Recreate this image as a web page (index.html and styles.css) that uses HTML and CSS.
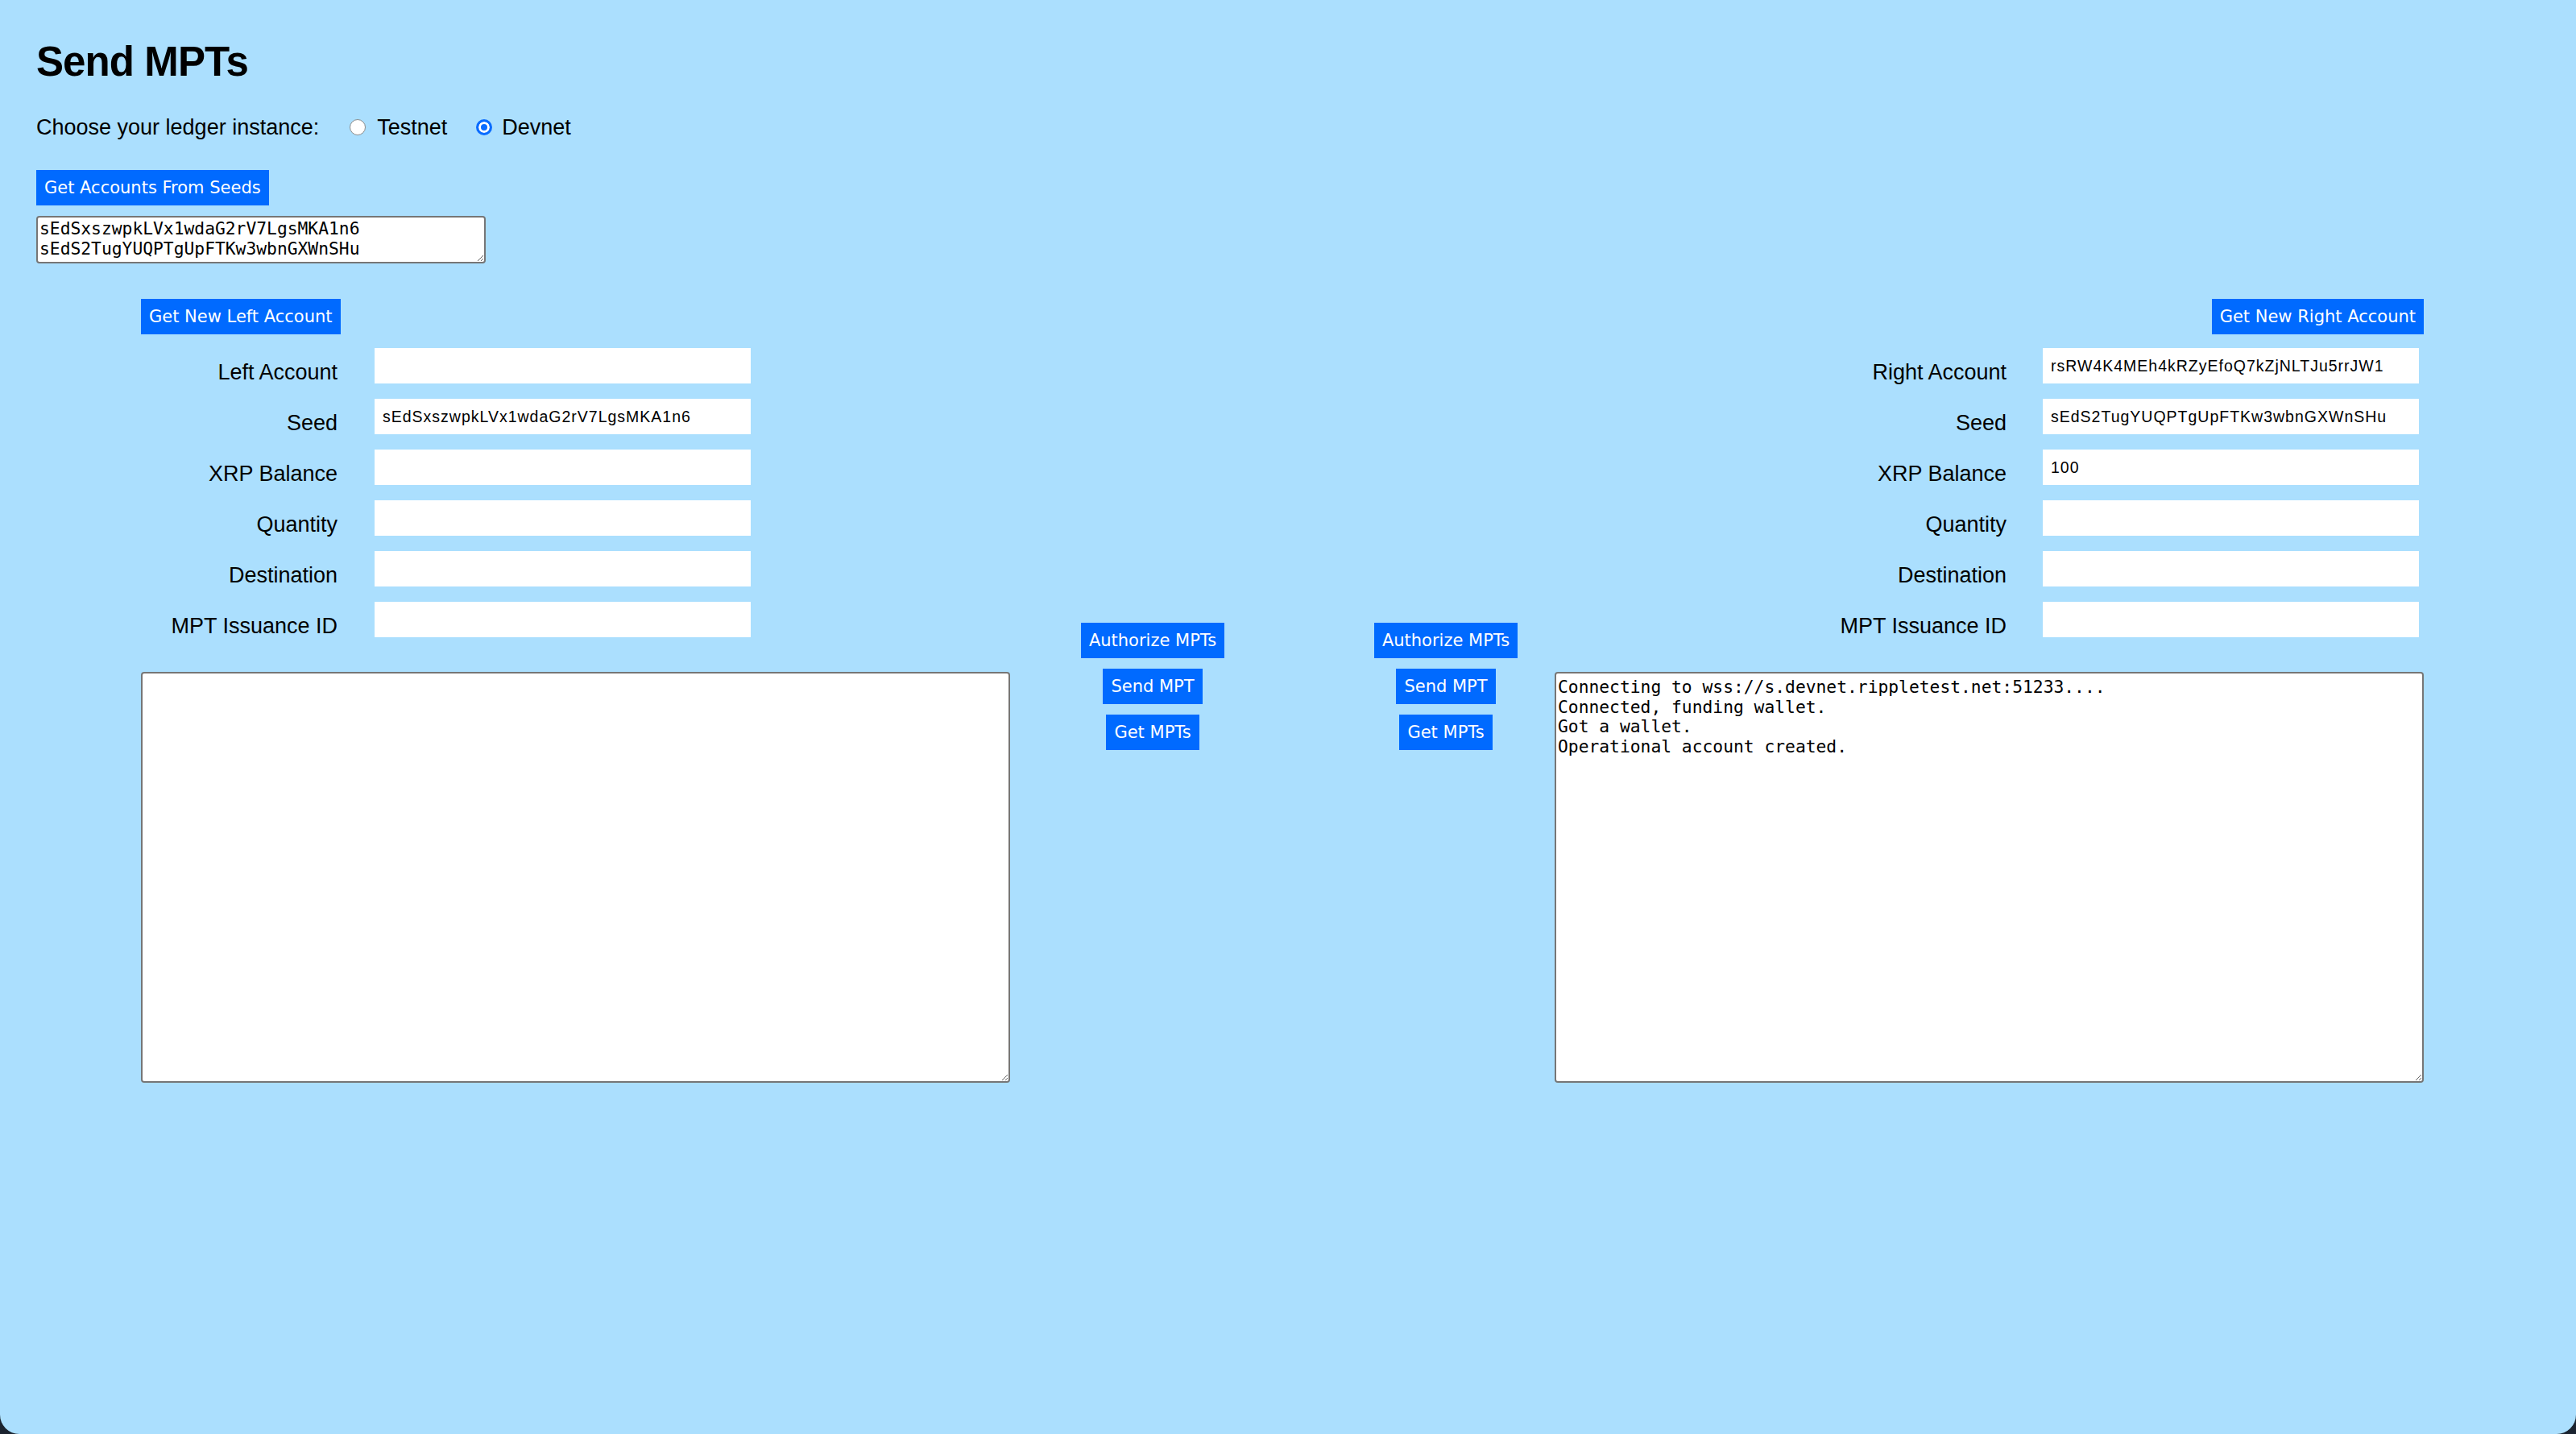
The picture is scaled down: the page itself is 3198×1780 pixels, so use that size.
FILE: index.html
```html
<!DOCTYPE html>
<html lang="en">
<head>
<meta charset="utf-8">
<title>Send MPTs</title>
<link rel="stylesheet" href="styles.css">
</head>
<body>
<div class="page">
  <h1 class="title">Send MPTs</h1>
  <div class="ledger">
    <span class="ledger-label">Choose your ledger instance:</span>
    <label class="opt"><input type="radio" name="net" class="radio">Testnet</label>
    <label class="opt"><input type="radio" name="net" class="radio" checked>Devnet</label>
  </div>
  <button class="btn btn-block">Get Accounts From Seeds</button>
  <textarea class="seeds">sEdSxszwpkLVx1wdaG2rV7LgsMKA1n6
sEdS2TugYUQPTgUpFTKw3wbnGXWnSHu</textarea>

  <div class="main">
    <div class="panel panel-left">
      <button class="btn">Get New Left Account</button>
      <div class="form form-left">
        <label class="lbl">Left Account</label><input class="field" type="text" value="">
        <label class="lbl">Seed</label><input class="field" type="text" value="sEdSxszwpkLVx1wdaG2rV7LgsMKA1n6">
        <label class="lbl">XRP Balance</label><input class="field" type="text" value="">
        <label class="lbl">Quantity</label><input class="field" type="text" value="">
        <label class="lbl">Destination</label><input class="field" type="text" value="">
        <label class="lbl">MPT Issuance ID</label><input class="field" type="text" value="">
      </div>
    </div>

    <div class="middle">
      <div class="actions actions-left">
        <button class="btn">Authorize MPTs</button>
        <button class="btn">Send MPT</button>
        <button class="btn">Get MPTs</button>
      </div>
      <div class="actions actions-right">
        <button class="btn">Authorize MPTs</button>
        <button class="btn">Send MPT</button>
        <button class="btn">Get MPTs</button>
      </div>
    </div>

    <div class="panel panel-right">
      <button class="btn btn-end">Get New Right Account</button>
      <div class="form form-right">
        <label class="lbl">Right Account</label><input class="field" type="text" value="rsRW4K4MEh4kRZyEfoQ7kZjNLTJu5rrJW1">
        <label class="lbl">Seed</label><input class="field" type="text" value="sEdS2TugYUQPTgUpFTKw3wbnGXWnSHu">
        <label class="lbl">XRP Balance</label><input class="field" type="text" value="100">
        <label class="lbl">Quantity</label><input class="field" type="text" value="">
        <label class="lbl">Destination</label><input class="field" type="text" value="">
        <label class="lbl">MPT Issuance ID</label><input class="field" type="text" value="">
      </div>
    </div>

    <textarea class="log log-left"></textarea>
    <textarea class="log log-right">Connecting to wss://s.devnet.rippletest.net:51233....
Connected, funding wallet.
Got a wallet.
Operational account created.</textarea>
  </div>
</div>
</body>
</html>
```
FILE: styles.css
```css
html {
  background: #1b2430;
}

body {
  margin: 0;
  min-height: 100vh;
  background: #abdffe;
  border-radius: 0 0 24px 24px;
  font-family: "Liberation Sans", Arial, sans-serif;
  color: #000;
}

.page {
  padding: 47px 0 0 45px;
}

.title {
  margin: 0;
  font-size: 51px;
  line-height: 60px;
  font-weight: 700;
  letter-spacing: -0.9px;
}

.ledger {
  display: flex;
  align-items: center;
  margin-top: 35px;
  font-size: 27px;
  line-height: 32px;
}

.opt {
  display: flex;
  align-items: center;
  margin-left: 38px;
}

.opt + .opt {
  margin-left: 36px;
}

.radio {
  appearance: none;
  -webkit-appearance: none;
  box-sizing: border-box;
  width: 20px;
  height: 20px;
  margin: 0 14px 0 0;
  border-radius: 50%;
  border: 1.5px solid #8c8c8c;
  background: #fff;
}

.radio:checked {
  border: 3px solid #0a6cff;
  background: #0a6cff;
  box-shadow: inset 0 0 0 3px #fff;
  margin-right: 12px;
}

.btn {
  font-family: "DejaVu Sans", Verdana, sans-serif;
  font-size: 21px;
  height: 44px;
  line-height: 44px;
  padding: 0 10px;
  border: none;
  border-radius: 0;
  background: #006aff;
  color: #fff;
  white-space: nowrap;
}

.btn-block {
  display: block;
  margin-top: 37px;
}

.seeds {
  display: block;
  box-sizing: border-box;
  width: 558px;
  height: 59px;
  margin-top: 13px;
  padding: 2px 2px 0;
  border: 2px solid #767676;
  border-radius: 4px;
  font-family: "DejaVu Sans Mono", Menlo, monospace;
  font-size: 21.3px;
  line-height: 24.5px;
  background: #fff;
  color: #000;
  overflow: hidden;
}

.main {
  display: grid;
  grid-template-columns: 1079px 676px 1079px;
  grid-template-rows: auto auto;
  row-gap: 43px;
  margin: 44px 0 0 130px;
}

.panel {
  display: flex;
  flex-direction: column;
  align-items: flex-start;
}

.panel-left {
  grid-column: 1;
  grid-row: 1;
}

.panel-right {
  grid-column: 3;
  grid-row: 1;
}

.btn-end {
  align-self: flex-end;
  margin-right: 0;
}

.form {
  display: grid;
  row-gap: 19px;
  align-items: end;
  margin-top: 17px;
}

.form-left {
  grid-template-columns: 244px 467px;
  column-gap: 46px;
}

.form-right {
  grid-template-columns: 561px 467px;
  column-gap: 45px;
}

.lbl {
  text-align: right;
  font-size: 27px;
  line-height: normal;
  margin-bottom: -2px;
}

.field {
  box-sizing: border-box;
  width: 467px;
  height: 44px;
  margin: 0;
  padding: 0 10px;
  border: none;
  border-radius: 0;
  background: #fff;
  font-family: "Liberation Sans", Arial, sans-serif;
  font-size: 19.5px;
  letter-spacing: 1px;
  color: #000;
}

.middle {
  grid-column: 2;
  grid-row: 1 / 3;
  display: flex;
  align-items: flex-start;
  padding-top: 402px;
}

.actions {
  display: flex;
  flex-direction: column;
  align-items: center;
  gap: 13px;
}

.actions-left {
  width: 354px;
}

.actions-right {
  width: 270px;
  padding-left: 52px;
}

.log {
  box-sizing: border-box;
  width: 1079px;
  height: 510px;
  margin: 0;
  padding: 5px 2px 2px;
  border: 2px solid #767676;
  border-radius: 4px;
  background: #fff;
  font-family: "DejaVu Sans Mono", Menlo, monospace;
  font-size: 21.3px;
  line-height: 24.7px;
  color: #000;
}

.log-left {
  grid-column: 1;
  grid-row: 2;
}

.log-right {
  grid-column: 3;
  grid-row: 2;
}
```
